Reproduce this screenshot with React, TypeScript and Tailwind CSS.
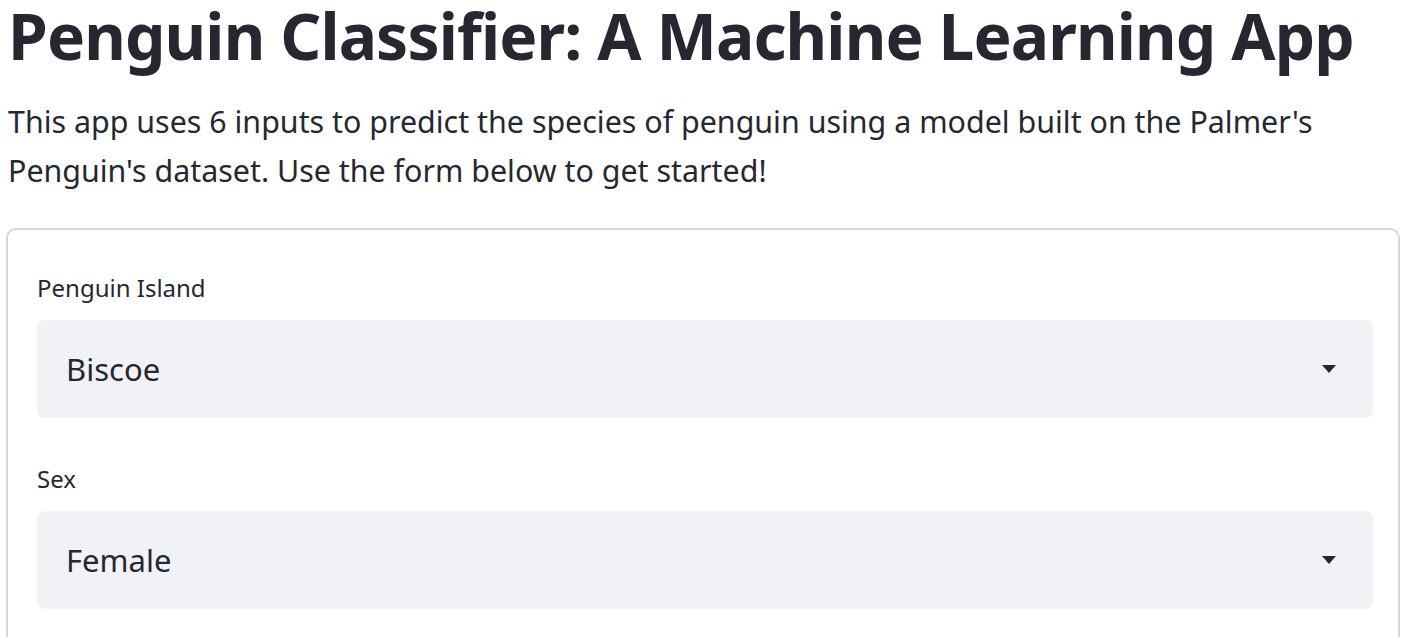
const fieldFont = { fontFamily: '"Noto Sans", "Open Sans", sans-serif' };

function SelectBox({ label, value }: { label: string; value: string }) {
  return (
    <div className="flex flex-col">
      <label className="text-[24px] leading-[32px] text-[#262730] mb-[16px]">{label}</label>
      <div className="flex h-[98px] items-center justify-between rounded-[8px] bg-[#f0f2f6] pl-[29px] pr-[37px]">
        <span className="text-[31px] text-[#262730]">{value}</span>
        <svg width="14" height="8" viewBox="0 0 14 8">
          <path d="M0 0 L14 0 L7 8 Z" fill="#262730" />
        </svg>
      </div>
    </div>
  );
}

export default function App() {
  return (
    <div className="min-h-screen bg-white px-[8px] text-[#262730]" style={fieldFont}>
      <h1 className="text-[64px] font-bold leading-[72px] tracking-[-0.85px]">
        Penguin Classifier: A Machine Learning App
      </h1>
      <p className="mt-[25px] text-[30.4px] leading-[49px]">
        This app uses 6 inputs to predict the species of penguin using a model built on the Palmer's Penguin's
        dataset. Use the form below to get started!
      </p>
      <div className="mt-[33px] -mx-[2px] flex flex-col gap-[45px] rounded-[10px] border-2 border-[#d6d7da] pl-[29px] pr-[25px] pt-[42px] pb-[40px]">
        <SelectBox label="Penguin Island" value="Biscoe" />
        <SelectBox label="Sex" value="Female" />
      </div>
    </div>
  );
}
